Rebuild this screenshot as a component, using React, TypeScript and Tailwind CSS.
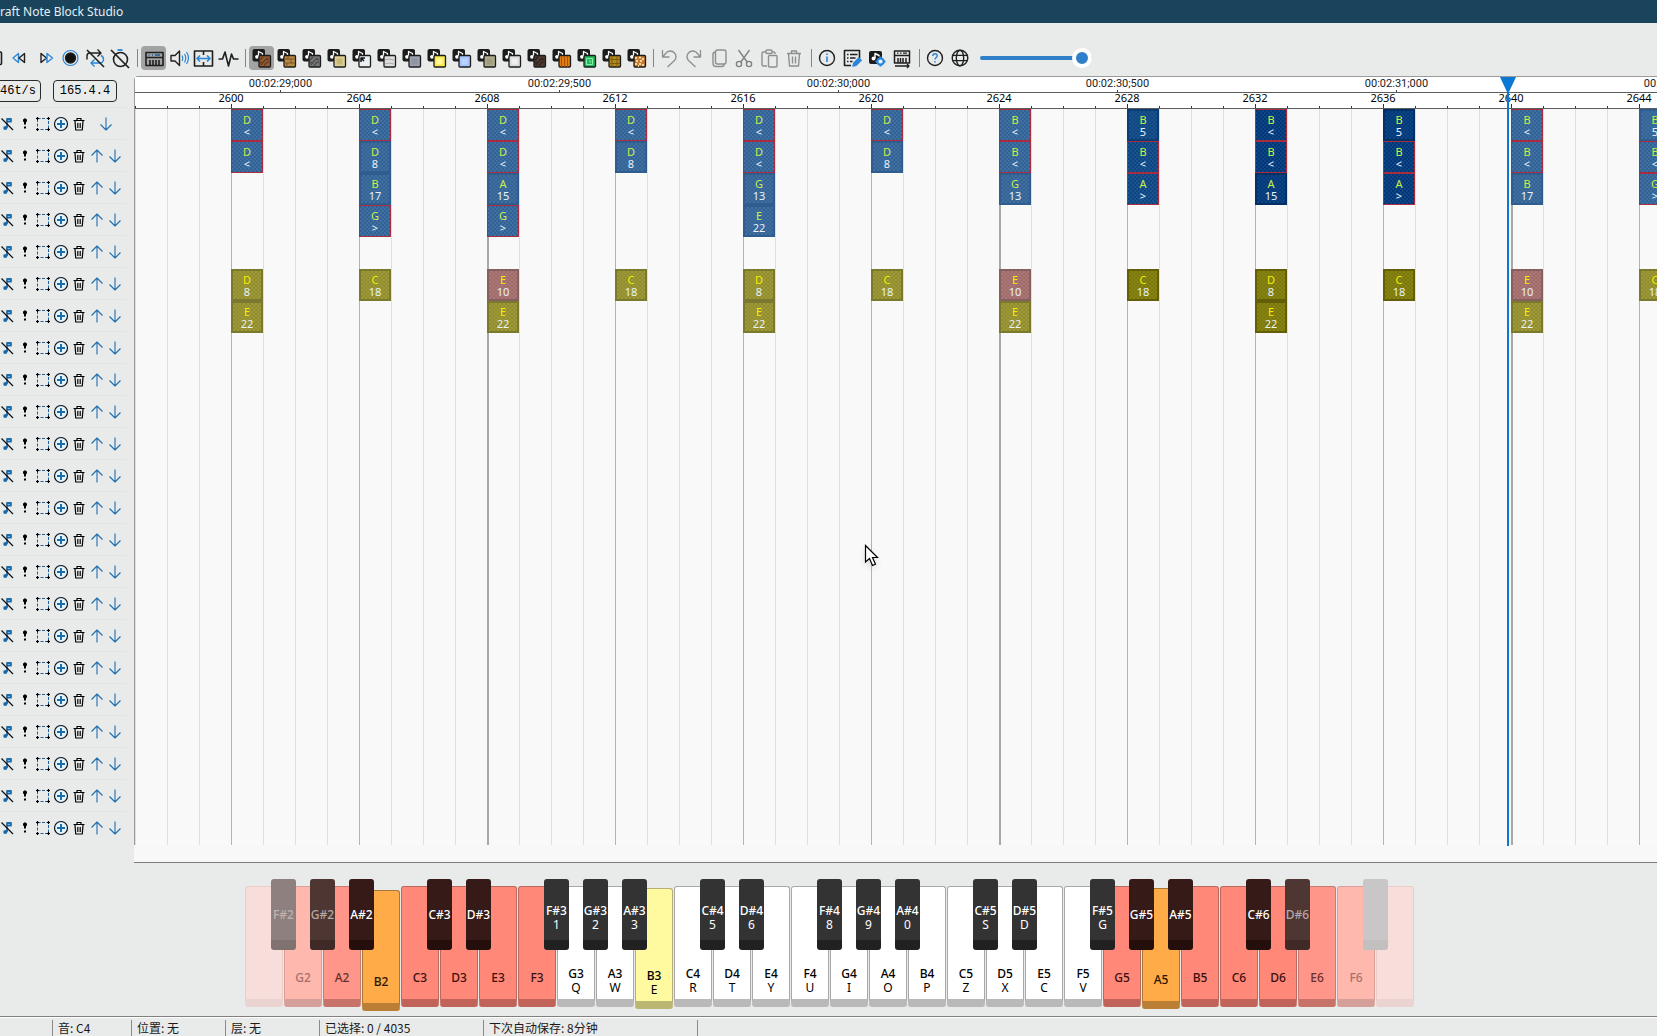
import type { ReactNode } from 'react';
import clsx from 'clsx';

interface IconProps {
  children: ReactNode;
  size?: number;
}

function Icon({ children, size = 24 }: IconProps) {
  return (
    <svg
      width={size}
      height={size}
      viewBox={`0 0 ${size} ${size}`}
      fill="none"
      stroke="#1f1f1f"
      strokeWidth="1.4"
      strokeLinejoin="round"
      className="shrink-0"
    >
      {children}
    </svg>
  );
}

interface ToolButtonProps {
  label: string;
  active?: boolean;
  children: ReactNode;
}

function ToolButton({ label, active, children }: ToolButtonProps) {
  return (
    <button
      type="button"
      aria-label={label}
      aria-pressed={active}
      className={clsx('h-6 w-[25px] shrink-0 rounded-sm', active && 'bg-[#a3a3a3]')}
    >
      <Icon>{children}</Icon>
    </button>
  );
}

function Separator() {
  return (
    <div className="flex h-6 w-2 shrink-0 items-center justify-center">
      <div className="h-[18px] w-px bg-[#858585]" />
    </div>
  );
}

const blue = '#2b86d9';

const instruments = [
  { name: 'Harp', color: '#8f5a34', mark: '#5f3519' },
  { name: 'Double Bass', color: '#b98a45', mark: '#7a5423' },
  { name: 'Bass Drum', color: '#777777', mark: '#444444' },
  { name: 'Snare Drum', color: '#ddcf95', mark: '#c8b878' },
  { name: 'Click', color: '#e8f0f1', mark: '#c8d4d8' },
  { name: 'Guitar', color: '#dedede', mark: '#aaaaaa' },
  { name: 'Flute', color: '#9aa0ac', mark: '#8d94a2' },
  { name: 'Bell', color: '#f7e94a', mark: '#fff79a' },
  { name: 'Chime', color: '#a5c4fb', mark: '#b9d2ff' },
  { name: 'Xylophone', color: '#aeac8e', mark: '#a09d7c' },
  { name: 'Iron Xylophone', color: '#dcdcdc', mark: '#efefef' },
  { name: 'Cow Bell', color: '#4d3a30', mark: '#2c1f19' },
  { name: 'Didgeridoo', color: '#e07d14', mark: '#a85205' },
  { name: 'Bit', color: '#1fb85a', mark: '#8af0b0' },
  { name: 'Banjo', color: '#b08a1c', mark: '#7a5c0c' },
  { name: 'Pling', color: '#c87a2c', mark: '#fff0cc' },
];

function InstrumentMark({ index, mark }: { index: number; mark: string }) {
  switch (index) {
    case 1:
      return <path d="M10 13h11M10 17h11M14 10v3M17 13v4M13 17v4" stroke={mark} strokeWidth="1" />;
    case 4:
      return <path d="M12 16v-4h4M12 12l3 3" stroke="#111" strokeWidth="1.500" />;
    case 5:
      return <path d="M11 14l4-1 5 1M11 18l4-1 5 1" stroke={mark} strokeWidth="1" />;
    case 12:
      return <path d="M12.500 10v11M15.500 10v11M18.500 10v11" stroke={mark} strokeWidth="1" />;
    case 13:
      return <path d="M12.500 12.500h6v6h-6zM15 15h1.500v1.500" stroke={mark} strokeWidth="1" />;
    case 14:
      return <path d="M10 13.500h11M10 17.500h11M13 10v11M18 10v11" stroke={mark} strokeWidth="1" />;
    case 0:
    case 2:
    case 11:
      return (
        <path d="M11 14l3-3M12 19l4-5 3-2M15 20l2-3 3-1M11 17l2-1M18 14l2 0" stroke={mark} strokeWidth="1.100" />
      );
    case 15:
      return (
        <path
          d="M11 12h2M15 11.500h2M18 13h2M12 15h2M16 15h2M11 18h2M15 18h2M18 19h2M14 20h1"
          stroke={mark}
          strokeWidth="1.700"
        />
      );
    default:
      return <path d="M12.500 12.500h6v6h-6z" fill={mark} stroke="none" />;
  }
}

function InstrumentIcon({ index, color, mark }: { index: number; color: string; mark: string }) {
  return (
    <>
      <rect x="3.500" y="3" width="12.500" height="12.500" rx="2" fill="#1b1b1b" stroke="none" />
      <path d="M9.500 10.500V5.500l4 2v1.500" stroke="#fff" strokeWidth="1.300" />
      <circle cx="8" cy="10.800" r="1.900" fill="#fff" stroke="none" />
      <rect x="10" y="9.500" width="11.500" height="11.500" rx="1" fill={color} stroke="#1c1c1c" strokeWidth="1.300" />
      <InstrumentMark index={index} mark={mark} />
    </>
  );
}

function Toolbar() {
  return (
    <div className="-ml-[17px] flex items-center pt-[23px] pb-[6px]">
      <ToolButton label="Stop">
        <rect x="6" y="6" width="12.500" height="12.500" rx="1" strokeWidth="1.600" />
      </ToolButton>
      <ToolButton label="Rewind">
        <path d="M10.500 7.500v9L5 12z" stroke={blue} />
        <path d="M16.500 7.500v9L11 12z" />
      </ToolButton>
      <ToolButton label="Fast forward">
        <path d="M8 7.500v9l5.500-4.500z" />
        <path d="M14 7.500v9l5.500-4.500z" stroke={blue} />
      </ToolButton>
      <ToolButton label="Record">
        <circle cx="12.500" cy="12" r="7.500" stroke={blue} strokeWidth="1.200" />
        <circle cx="12.500" cy="12" r="5" fill="#111" />
      </ToolButton>
      <ToolButton label="Loop">
        <path d="M4 13.500V10q0-3 3-3h10.500M14.500 3.500L18 7l-3.500 3.500" />
        <path d="M18 9.500q2.500 1 2.500 4T17 17H8M11.500 13.500L8 17l3.500 3.500" stroke={blue} />
        <path d="M4 4l17 17" strokeWidth="1.600" />
      </ToolButton>
      <ToolButton label="Metronome">
        <circle cx="12.500" cy="13.500" r="7" strokeWidth="1.600" />
        <path d="M9.500 4h5" stroke={blue} strokeWidth="1.800" />
        <path d="M3 4l18 18" strokeWidth="1.700" />
      </ToolButton>
      <Separator />
      <ToolButton label="Piano" active>
        <rect x="5" y="6.500" width="17" height="13" strokeWidth="1.600" />
        <path d="M5 11.500h17M9 19v-5M12 19v-5M15 19v-5M18 19v-5" strokeWidth="1.600" />
        <path d="M7.500 9h1M11 9h1M14 9h5" stroke="#1d5e99" strokeWidth="1.500" />
      </ToolButton>
      <ToolButton label="Sound">
        <path d="M5 9.500h4L13.500 5v14.500L9 15H5z" />
        <path d="M16 9.500q1.500 2.500 0 5.500M18.500 8q2.500 4 0 8.500M20.500 6q4 6 0 12" stroke={blue} strokeWidth="1.200" />
      </ToolButton>
      <ToolButton label="Fit width">
        <rect x="3.500" y="5" width="18" height="15" strokeWidth="1.600" />
        <path d="M12.500 5v4M12.500 16v4" strokeWidth="1.600" />
        <path d="M6 12.500h13M9 9.500l-3 3 3 3M16 9.500l3 3-3 3" stroke={blue} strokeWidth="1.600" />
      </ToolButton>
      <ToolButton label="Wave">
        <path d="M2.500 13h4L9 6l3.500 14L15.500 8l2 5h5" strokeWidth="1.600" />
      </ToolButton>
      <Separator />
      {instruments.map((instrument, index) => (
        <ToolButton key={instrument.name} label={instrument.name} active={index === 0}>
          <InstrumentIcon index={index} color={instrument.color} mark={instrument.mark} />
        </ToolButton>
      ))}
      <Separator />
      <ToolButton label="Undo">
        <path d="M5.500 4v7h7M5.500 11L10 6q4.500-2.500 7.500 1t0 7.500l-7 6.500" stroke="#8e8e8e" strokeWidth="1.300" />
      </ToolButton>
      <ToolButton label="Redo">
        <path d="M18.500 4v7h-7M18.500 11L14 6q-4.500-2.500-7.500 1t0 7.500l7 6.500" stroke="#8e8e8e" strokeWidth="1.300" />
      </ToolButton>
      <ToolButton label="Copy">
        <rect x="8.500" y="4" width="10.500" height="14" rx="2" stroke="#8e8e8e" />
        <path d="M8.500 6Q6 6 6 8.500v9Q6 20.500 9 20.500h6q2 0 2-2.500" stroke="#8e8e8e" />
      </ToolButton>
      <ToolButton label="Cut">
        <path d="M6.500 4l9 12.500M17.500 4l-9 12.500" stroke="#808080" />
        <circle cx="7" cy="18" r="2.600" stroke="#808080" />
        <circle cx="17" cy="18" r="2.600" stroke="#808080" />
      </ToolButton>
      <ToolButton label="Paste">
        <path d="M10 20H6.500Q5 20 5 18.500V7.500Q5 6 6.500 6H9M15 6h1.500Q18 6 18 8" stroke="#8e8e8e" />
        <rect x="9" y="4" width="6" height="3.500" rx="1" stroke="#8e8e8e" />
        <rect x="11.500" y="9.500" width="8.500" height="11.500" rx="1" stroke="#8e8e8e" />
      </ToolButton>
      <ToolButton label="Delete">
        <path d="M5 7.500h14M9.500 7V5h5v2M6.500 7.500l1 12.500h9l1-12.500M10.500 10.500v7M13.500 10.500v7" stroke="#8e8e8e" />
      </ToolButton>
      <Separator />
      <ToolButton label="Song info">
        <circle cx="12" cy="12" r="7.500" />
        <path d="M12 10.500v5.500M12 7.500v1.600" stroke={blue} strokeWidth="1.600" />
      </ToolButton>
      <ToolButton label="Song properties">
        <path d="M19.500 12V4.500h-15v15H11" strokeWidth="1.600" />
        <path d="M7 8.500h1.500M10 8.500h7.500M7 12h1.500M10 12h5.500M7 15.500h1.500M10 15.500h2.500" strokeWidth="1.300" />
        <path d="M13 20l.8-3 5-5 2.400 2.200-5 5z" fill={blue} stroke={blue} />
      </ToolButton>
      <ToolButton label="Instrument settings">
        <rect x="4" y="5" width="13" height="13" rx="2" fill="#1b1b1b" stroke="none" />
        <path d="M10 12.500V7.500l4 2v1" stroke="#fff" />
        <circle cx="8.500" cy="12.500" r="1.900" fill="#fff" stroke="none" />
        <circle cx="15.500" cy="15.500" r="3.200" fill="#e9f3fc" stroke={blue} strokeWidth="2.200" />
        <path d="M15.500 10.500v2M15.500 18.500v2M10.500 15.500h2M18.500 15.500h2" stroke={blue} strokeWidth="2" />
      </ToolButton>
      <ToolButton label="MIDI devices">
        <path d="M4.500 17V5h15v12zM4.500 9.500h15M8 17v-5M10.500 17v-5M13 17v-5M16 17v-5" strokeWidth="1.500" />
        <path d="M7 7.200h1.500M10 7.200h1.500M13 7.200h4" strokeWidth="1.200" />
        <path d="M5 20h14M17 18l2 2-2 2" strokeWidth="1.300" />
      </ToolButton>
      <Separator />
      <ToolButton label="Help">
        <circle cx="12" cy="12" r="7.500" />
        <path d="M9.800 10q0-2.200 2.200-2.200t2.200 2q0 1.200-1.200 1.900-1 .7-1 1.900M12 15v1.500" stroke={blue} />
      </ToolButton>
      <ToolButton label="Language">
        <circle cx="12" cy="12" r="7.800" />
        <ellipse cx="12" cy="12" rx="3.700" ry="7.800" />
        <path d="M5 9.300h14M5 14.700h14" strokeWidth="1.300" />
      </ToolButton>
      <input
        type="range"
        aria-label="Volume"
        min={0}
        max={100}
        defaultValue={100}
        className="ml-[7px] h-5 w-28 appearance-none bg-transparent [&::-webkit-slider-runnable-track]:h-1 [&::-webkit-slider-runnable-track]:rounded-full [&::-webkit-slider-runnable-track]:bg-[#2f80c8] [&::-webkit-slider-thumb]:-mt-2 [&::-webkit-slider-thumb]:size-5 [&::-webkit-slider-thumb]:appearance-none [&::-webkit-slider-thumb]:rounded-full [&::-webkit-slider-thumb]:border-4 [&::-webkit-slider-thumb]:border-solid [&::-webkit-slider-thumb]:border-white [&::-webkit-slider-thumb]:bg-[#2f80c8]"
      />
    </div>
  );
}

function LayerButton({ label, children }: { label: string; children: ReactNode }) {
  return (
    <button type="button" aria-label={label} className="flex w-[18px] shrink-0 justify-center">
      <Icon size={16}>{children}</Icon>
    </button>
  );
}

function LayerRow({ index }: { index: number }) {
  const layer = index + 1;

  return (
    <div className="mr-2 flex h-8 items-center border-t border-[#dfe5e9]">
      <div className="-ml-[2px] flex flex-1 items-center">
        <LayerButton label={`Mute layer ${layer}`}>
          <path d="M8 12V3h4v2.500H8.500" stroke="#1f6aa8" strokeWidth="1.800" />
          <circle cx="6.300" cy="12" r="2.100" fill="#1f6aa8" stroke="none" />
          <path d="M2.500 2.500l11.500 11.500" stroke="#111" strokeWidth="1.200" />
        </LayerButton>
        <LayerButton label={`Solo layer ${layer}`}>
          <path d="M8 2.500v6" stroke="#000" strokeWidth="2" />
          <path d="M6 4.500h4" stroke="#000" strokeWidth="2.500" />
          <path d="M8 10.500v2" stroke="#000" strokeWidth="2" />
        </LayerButton>
        <LayerButton label={`Select layer ${layer}`}>
          <path d="M2.500 2.500h11v11h-11z" stroke="#1f5f96" strokeWidth="1" strokeDasharray="3 1.500" />
          <path
            d="M1 2.500h3M2.500 1v3M12 2.500h3M13.500 1v3M1 13.500h3M2.500 12v3M12 13.500h3M13.500 12v3"
            stroke="#000"
            strokeWidth="1.200"
          />
        </LayerButton>
        <LayerButton label={`Insert layer ${layer}`}>
          <circle cx="8" cy="8" r="6.500" fill="#e3f4fd" stroke="#111" strokeWidth="1.200" />
          <path d="M8 4v8M4 8h8" stroke="#1c6fae" strokeWidth="2" />
        </LayerButton>
        <LayerButton label={`Remove layer ${layer}`}>
          <path
            d="M2.500 4.500h11M6 4V2.500h4V4M4 5l.7 9h6.600L12 5M6.800 7v5M9.200 7v5"
            stroke="#000"
            strokeWidth="1.200"
          />
        </LayerButton>
        {index > 0 && (
          <LayerButton label={`Move layer ${layer} up`}>
            <path d="M8 14.500V2M2.500 7.500L8 2l5.500 5.500" stroke="#1f6fae" strokeWidth="1.100" />
          </LayerButton>
        )}
        <div className={clsx('flex justify-center', index === 0 && 'w-9')}>
          <LayerButton label={`Move layer ${layer} down`}>
            <path d="M8 1.500V14M2.500 8.500L8 14l5.500-5.500" stroke="#1f6fae" strokeWidth="1.100" />
          </LayerButton>
        </div>
      </div>
    </div>
  );
}

function LayerPanel() {
  return (
    <aside className="w-[134px] shrink-0 overflow-hidden">
      <div className="flex h-[31px] items-start gap-3 pt-1 font-['Liberation_Mono',monospace] text-xs">
        <div className="-ml-[10px] flex h-[22px] w-[51px] items-center justify-end rounded-sm border border-[#2a2a2a] pr-1">
          46t/s
        </div>
        <div className="flex h-[22px] w-16 items-center justify-center rounded-sm border border-[#2a2a2a]">
          165.4.4
        </div>
      </div>
      {Array.from({ length: 23 }, (_, index) => (
        <LayerRow key={index} index={index} />
      ))}
    </aside>
  );
}

type Tone = 'light' | 'mid' | 'dark';

interface Column {
  tone: Tone;
  harp: string[];
  drums: string[];
}

// First character is the pitch, the rest is the click count or an out-of-range arrow
const noteColumns: Record<number, Column> = {
  2600: { tone: 'light', harp: ['D<', 'D<'], drums: ['D8', 'E22'] },
  2604: { tone: 'light', harp: ['D<', 'D8', 'B17', 'G>'], drums: ['C18'] },
  2608: { tone: 'light', harp: ['D<', 'D<', 'A15', 'G>'], drums: ['E10', 'E22'] },
  2612: { tone: 'light', harp: ['D<', 'D8'], drums: ['C18'] },
  2616: { tone: 'light', harp: ['D<', 'D<', 'G13', 'E22'], drums: ['D8', 'E22'] },
  2620: { tone: 'light', harp: ['D<', 'D8'], drums: ['C18'] },
  2624: { tone: 'light', harp: ['B<', 'B<', 'G13'], drums: ['E10', 'E22'] },
  2628: { tone: 'mid', harp: ['B5', 'B<', 'A>'], drums: ['C18'] },
  2632: { tone: 'dark', harp: ['B<', 'B<', 'A15'], drums: ['D8', 'E22'] },
  2636: { tone: 'dark', harp: ['B5', 'B<', 'A>'], drums: ['C18'] },
  2640: { tone: 'light', harp: ['B<', 'B<', 'B17'], drums: ['E10', 'E22'] },
  2644: { tone: 'light', harp: ['B5', 'B<', 'G>'], drums: ['C18'] },
};

const harpTones: Record<Tone, string> = {
  light: 'bg-[#36679c] border-[#2f5d90]',
  mid: 'bg-[#0f4a88] border-[#0b3d74]',
  dark: 'bg-[#023a7e] border-[#043068]',
};

const drumTones: Record<Tone, string> = {
  light: 'bg-[#99952f] border-[#7b7830]',
  mid: 'bg-[#827d08] border-[#625f08]',
  dark: 'bg-[#827d08] border-[#625f08]',
};

interface NoteProps {
  note: string;
  kind: 'harp' | 'drum';
  tone: Tone;
}

function Note({ note, kind, tone }: NoteProps) {
  const value = note.slice(1);
  const outOfRange = value === '<' || value === '>';
  const snare = kind === 'drum' && value === '10';

  return (
    <div
      className={clsx(
        'flex size-8 flex-col items-center bg-[repeating-conic-gradient(#ffffff0d_0_25%,#0000000d_0_50%)] bg-size-[4px_4px] text-[11px] leading-3',
        kind === 'harp' && harpTones[tone],
        kind === 'drum' && !snare && drumTones[tone],
        snare && 'border-[#86605f] bg-[#a87170]',
        outOfRange ? 'border border-[#a82c40]! pt-1' : 'border-2 pt-[3px]',
      )}
    >
      <span className={kind === 'harp' ? 'text-[#c9f04c]' : 'text-[#f2ec00]'}>{note[0]}</span>
      <span className="text-[#eaf2fb]">{value}</span>
    </div>
  );
}

function TickColumn({ tick }: { tick: number }) {
  const column = noteColumns[tick];

  return (
    <div className="relative h-[736px] w-8 shrink-0">
      <div
        className={clsx(
          'absolute inset-y-0 left-0',
          tick % 16 === 0 ? 'w-[2px] bg-[#a9a9a9]' : tick % 4 === 0 ? 'w-px bg-[#b4b4b4]' : 'w-px bg-[#dedede]',
        )}
      />
      {column && (
        <div className="relative">
          <div className="h-40">
            {column.harp.map((note, index) => (
              <Note key={index} note={note} kind="harp" tone={column.tone} />
            ))}
          </div>
          {column.drums.map((note, index) => (
            <Note key={index} note={note} kind="drum" tone={column.tone} />
          ))}
        </div>
      )}
    </div>
  );
}

const times = ['00:02:29;000', '00:02:29;500', '00:02:30;000', '00:02:30;500', '00:02:31;000', '00:02:31;500'];
const ticks = Array.from({ length: 48 }, (_, index) => 2597 + index);

function Timeline() {
  return (
    <section className="relative min-w-0 flex-1 overflow-hidden border-b border-[#7c7c7c] bg-[#f9f9f9]">
      <div className="rounded-tl-sm border-t border-l border-[#9b9b9b]">
        <div className="flex h-[15px] bg-white pl-[6px] text-[11px] leading-[13px]">
          {times.map((time) => (
            <div key={time} className="flex w-[279px] shrink-0 flex-col items-center">
              <span className="h-[13px] font-[Roboto,sans-serif] text-[#222]">{time}</span>
              <span className="h-[2px] w-px bg-[#444]" />
            </div>
          ))}
        </div>
        <div className="border-y border-[#5c5c5c] bg-white">
          <div className="flex h-[11px] pl-8 text-[11px] leading-[9px]">
            {ticks
              .filter((tick) => tick % 4 === 0)
              .map((tick) => (
                <span key={tick} className="w-32 shrink-0 text-center">
                  {tick}
                </span>
              ))}
          </div>
          <div className="flex h-1 items-end">
            {ticks.map((tick) => (
              <div
                key={tick}
                className={clsx('w-8 shrink-0 border-l border-[#333]', tick % 4 === 0 ? 'h-1' : 'h-[2px]')}
              />
            ))}
          </div>
        </div>
        <div className="flex">
          {ticks.map((tick) => (
            <TickColumn key={tick} tick={tick} />
          ))}
        </div>
      </div>
      <div className="h-[17px] bg-[#f8f8f8]" />

      {/* playback marker */}
      <svg width="16" height="769" viewBox="0 0 16 769" className="absolute top-px left-[1366px]">
        <path d="M0 0h16L9 15v754H7V15z" fill="#0a78d4" />
      </svg>

      {/* mouse pointer */}
      <svg width="18" height="26" viewBox="0 0 18 26" className="absolute top-[468px] left-[730px] drop-shadow-md">
        <path d="M1.500 1.500v16.500l4-3.500 3 7 3-1.300-3-6.700h5z" fill="#fff" stroke="#000" strokeWidth="1.200" />
      </svg>
    </section>
  );
}

type KeyColor = 'white' | 'red' | 'redSoft' | 'redFaint' | 'redGhost' | 'orange' | 'yellow';
type SharpColor = 'dark' | 'soft' | 'faint' | 'ghost';

interface PianoKey {
  name: string;
  hotkey?: string;
  color: KeyColor;
  press?: 'half' | 'full';
  sharp?: { name: string; hotkey?: string; color?: SharpColor };
}

const keys: PianoKey[] = [
  { name: '', color: 'redGhost', sharp: { name: 'F#2', color: 'faint' } },
  { name: 'G2', color: 'redFaint', sharp: { name: 'G#2', color: 'soft' } },
  { name: 'A2', color: 'redSoft', sharp: { name: 'A#2' } },
  { name: 'B2', color: 'orange', press: 'full' },
  { name: 'C3', color: 'red', sharp: { name: 'C#3' } },
  { name: 'D3', color: 'red', sharp: { name: 'D#3' } },
  { name: 'E3', color: 'red' },
  { name: 'F3', color: 'red', sharp: { name: 'F#3', hotkey: '1' } },
  { name: 'G3', hotkey: 'Q', color: 'white', sharp: { name: 'G#3', hotkey: '2' } },
  { name: 'A3', hotkey: 'W', color: 'white', sharp: { name: 'A#3', hotkey: '3' } },
  { name: 'B3', hotkey: 'E', color: 'yellow', press: 'half' },
  { name: 'C4', hotkey: 'R', color: 'white', sharp: { name: 'C#4', hotkey: '5' } },
  { name: 'D4', hotkey: 'T', color: 'white', sharp: { name: 'D#4', hotkey: '6' } },
  { name: 'E4', hotkey: 'Y', color: 'white' },
  { name: 'F4', hotkey: 'U', color: 'white', sharp: { name: 'F#4', hotkey: '8' } },
  { name: 'G4', hotkey: 'I', color: 'white', sharp: { name: 'G#4', hotkey: '9' } },
  { name: 'A4', hotkey: 'O', color: 'white', sharp: { name: 'A#4', hotkey: '0' } },
  { name: 'B4', hotkey: 'P', color: 'white' },
  { name: 'C5', hotkey: 'Z', color: 'white', sharp: { name: 'C#5', hotkey: 'S' } },
  { name: 'D5', hotkey: 'X', color: 'white', sharp: { name: 'D#5', hotkey: 'D' } },
  { name: 'E5', hotkey: 'C', color: 'white' },
  { name: 'F5', hotkey: 'V', color: 'white', sharp: { name: 'F#5', hotkey: 'G' } },
  { name: 'G5', color: 'red', sharp: { name: 'G#5' } },
  { name: 'A5', color: 'orange', press: 'half', sharp: { name: 'A#5' } },
  { name: 'B5', color: 'red' },
  { name: 'C6', color: 'red', sharp: { name: 'C#6' } },
  { name: 'D6', color: 'red', sharp: { name: 'D#6', color: 'soft' } },
  { name: 'E6', color: 'redSoft' },
  { name: 'F6', color: 'redFaint', sharp: { name: '', color: 'ghost' } },
  { name: '', color: 'redGhost' },
];

const keyColors: Record<KeyColor, string> = {
  white: 'bg-white border-[#a8a8a8] border-b-[#b9b9b9] text-black',
  red: 'bg-[#ff8878] border-[#b86a60] border-b-[#c2635a] text-[#3a0f0c]',
  redSoft: 'bg-[#ff9689] border-[#c47c73] border-b-[#c8736a] text-[#6b2f2a]',
  redFaint: 'bg-[#ffb8ae] border-[#d9a09a] border-b-[#d5a09a] text-[#a8706a]',
  redGhost: 'bg-[#f7dedb] border-[#ecccc9] border-b-[#ead3d0]',
  orange: 'bg-[#ffab48] border-[#a87838] border-b-[#ba7f35] text-[#2a1600]',
  yellow: 'bg-[#fff9a0] border-[#b5b078] border-b-[#bcb673] text-black',
};

const sharpColors: Record<SharpColor, string> = {
  dark: 'bg-[#351a17] border-[#240f0d] text-white',
  soft: 'bg-[#4e3633] border-[#3f2a28] text-[#b5a9a8]',
  faint: 'bg-[#8d807e] border-[#7f7270] text-[#beb4b3]',
  ghost: 'bg-[#c8c6c6] border-[#c2bfbf]',
};

function Piano() {
  return (
    <section aria-label="Piano" className="flex justify-center gap-px pt-[23px] pb-[5px] pl-0.5 text-xs font-medium">
      {keys.map((key, index) => (
        <div
          key={index}
          className={clsx(
            'relative h-[125px] w-[38px] shrink-0',
            key.press === 'half' && 'pt-[2px]',
            key.press === 'full' && 'pt-1',
          )}
        >
          <button
            type="button"
            aria-label={key.name || 'Unused key'}
            className={clsx(
              'flex h-[121px] w-full flex-col items-center rounded-[3px] border border-b-8 leading-[14px]',
              key.hotkey ? 'pt-20' : 'pt-[84px]',
              keyColors[key.color],
            )}
          >
            <span>{key.name}</span>
            <span className="font-normal">{key.hotkey}</span>
          </button>
          {key.sharp && (
            <button
              type="button"
              aria-label={key.sharp.name || 'Unused sharp key'}
              className={clsx(
                'absolute -top-[7px] left-[26px] z-10 flex h-[71px] w-[25px] flex-col items-center rounded-[3px] border-b-10 leading-[14px]',
                key.sharp.hotkey ? 'border-[#212121] bg-[#333333] pt-[25px] text-white' : 'pt-[29px]',
                !key.sharp.hotkey && sharpColors[key.sharp.color ?? 'dark'],
              )}
            >
              <span>{key.sharp.name}</span>
              <span className="font-normal">{key.sharp.hotkey}</span>
            </button>
          )}
        </div>
      ))}
    </section>
  );
}

function StatusBar() {
  return (
    <footer className="border-t border-[#808080] font-['Noto_Sans_CJK_SC',sans-serif] text-xs leading-4 text-[#1a1a1a]">
      <div className="flex h-[19px] border-t border-white pt-[2px] *:border-l *:border-[#8a8a8a] *:pl-[5px] *:whitespace-nowrap">
        <div className="w-[52px] border-l-0!" />
        <div className="w-[79px]">音: C4</div>
        <div className="w-[94px]">位置: 无</div>
        <div className="w-[94px]">层: 无</div>
        <div className="w-[164px]">已选择: 0 / 4035</div>
        <div className="w-[214px]">下次自动保存: 8分钟</div>
        <div className="flex-1" />
      </div>
    </footer>
  );
}

export default function App() {
  return (
    <div className="min-h-screen overflow-hidden bg-[#e9eaea] font-['Noto_Sans','Noto_Sans_CJK_SC',sans-serif] text-black">
      <header className="h-[23px] bg-[#19445c] text-xs leading-[23px] text-[#e6edf1]">
        <h1>raft Note Block Studio</h1>
      </header>
      <Toolbar />
      <main className="flex">
        <LayerPanel />
        <Timeline />
      </main>
      <Piano />
      <StatusBar />
    </div>
  );
}
